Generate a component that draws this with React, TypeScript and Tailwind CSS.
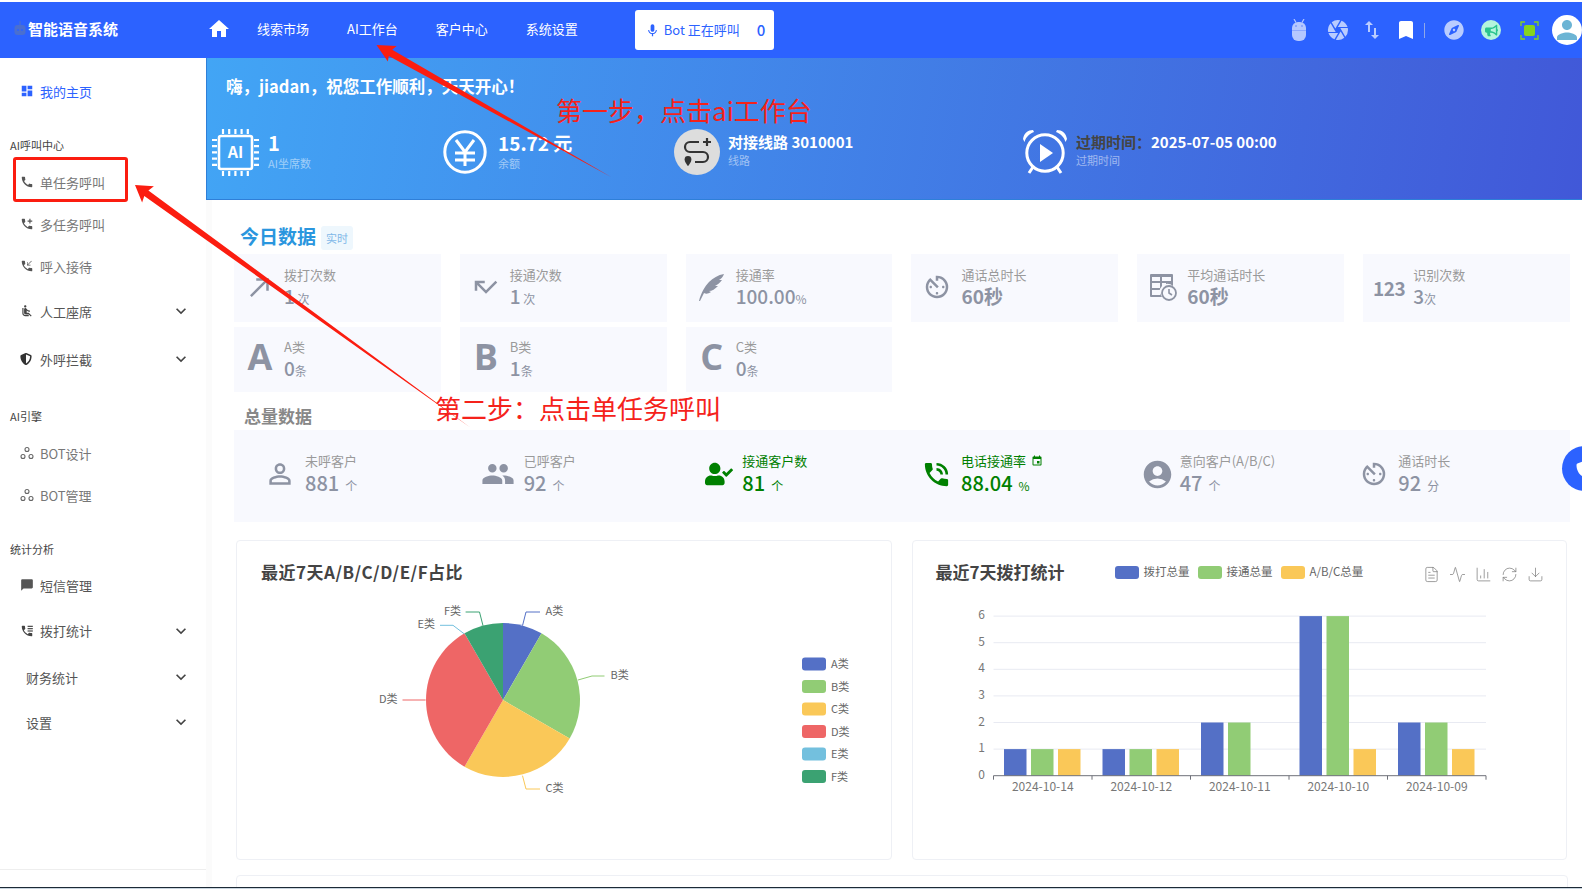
import React from "react";
import {
  MdHome, MdMic, MdCamera, MdSwapVert, MdBookmark, MdDashboard, MdCall, MdAddIcCall, MdPhoneCallback,
  MdAirlineSeatReclineNormal, MdExpandMore, MdChatBubble, MdCallMade, MdCallMissed, MdAvTimer,
  MdPermIdentity, MdPeople, MdPhoneInTalk, MdAccountCircle, MdEvent, MdPerson,
} from "react-icons/md";
import { FaCompass, FaBullhorn, FaShieldAlt, FaUserCheck } from "react-icons/fa";
import { FileText, Activity, ChartColumn, RefreshCw, Download } from "lucide-react";

const PHONE = "M20 15.5c-1.25 0-2.45-.2-3.57-.57-.35-.11-.74-.03-1.02.24l-2.2 2.2c-2.83-1.44-5.14-3.75-6.59-6.59l2.2-2.21c.28-.27.36-.66.25-1.01C8.7 6.45 8.5 5.25 8.5 4c0-.55-.45-1-1-1H4c-.55 0-1 .45-1 1 0 9.39 7.61 17 17 17 .55 0 1-.45 1-1v-3.5c0-.55-.45-1-1-1z";

function BotIcon() {
  return (
    <svg width="14" height="14" viewBox="0 0 14 14" fill="none" stroke="#666" strokeWidth="1.1">
      <circle cx="7" cy="3.5" r="2" />
      <circle cx="3" cy="10.5" r="2" />
      <circle cx="11" cy="10.5" r="2" />
    </svg>
  );
}
function DialStat() {
  return (
    <svg width="14" height="14" viewBox="0 0 24 24" fill="#444">
      <path d={PHONE} />
      <rect x="13" y="3" width="9" height="2" />
      <rect x="13" y="7" width="9" height="2" />
      <rect x="13" y="11" width="9" height="2" />
    </svg>
  );
}
function LogoIcon() {
  return (
    <svg width="12" height="15" viewBox="0 0 12 15" fill="#4a6fd0">
      <rect x="5.400" y="0" width="1.200" height="4" />
      <rect x="0.500" y="4" width="11" height="10" rx="3" />
      <circle cx="4" cy="9" r="1" fill="#2c62ff" />
      <circle cx="8" cy="9" r="1" fill="#2c62ff" />
    </svg>
  );
}
function AndroidIcon() {
  return (
    <svg width="16" height="22" viewBox="0 0 16 22" fill="#b5c8ff">
      <rect x="1" y="3" width="14" height="19" rx="6" />
      <path d="M3 0l2 3.5M13 0l-2 3.5" stroke="#b5c8ff" strokeWidth="1.2" />
      <rect x="1" y="11" width="14" height="1" fill="#8ea9ff" />
      <circle cx="5" cy="7" r="0.8" fill="#5a7fff" />
      <circle cx="11" cy="7" r="0.8" fill="#5a7fff" />
    </svg>
  );
}
function FrameIcon() {
  return (
    <svg width="19" height="19" viewBox="0 0 19 19" fill="none" stroke="#86d41e" strokeWidth="1.3">
      <path d="M1 5V1h4M14 1h4v4M18 14v4h-4M5 18H1v-4" />
      <rect x="4" y="4" width="11" height="11" rx="2" fill="#86d41e" stroke="none" />
    </svg>
  );
}
function ChipIcon() {
  const pins = [0, 1, 2, 3, 4];
  return (
    <svg width="47" height="47" viewBox="0 0 47 47" fill="none" stroke="#fff">
      <rect x="7" y="7" width="33" height="33" rx="2" strokeWidth="2.6" />
      {pins.map((i) => (
        <g key={i} strokeWidth="2.2">
          <path d={`M${11 + i * 6.2} 0v5M${11 + i * 6.2} 42v5M0 ${11 + i * 6.2}h5M42 ${11 + i * 6.2}h5`} />
        </g>
      ))}
      <text x="23.5" y="29" textAnchor="middle" fill="#fff" stroke="none" fontSize="16" fontWeight="700">AI</text>
    </svg>
  );
}
function YenIcon() {
  return (
    <svg width="44" height="44" viewBox="0 0 44 44" fill="none" stroke="#fff" strokeWidth="3">
      <circle cx="22" cy="22" r="20.2" />
      <path d="M13 10l9 12 9-12M12 23h20M12 30h20M22 22v14" />
    </svg>
  );
}
function RouteIcon() {
  return (
    <div className="w-[46px] h-[46px] rounded-full bg-[#dddddd] flex items-center justify-center">
      <svg width="32" height="32" viewBox="0 0 32 32" fill="none" stroke="#333" strokeWidth="2.2">
        <path d="M18 6H9a5 5 0 0 0 0 10h13a5 5 0 0 1 0 10H14" />
        <path d="M26 2v8M22 6h8" />
        <path d="M7 20a3.4 3.4 0 0 1 3.4 3.4C10.4 26 7 30 7 30s-3.4-4-3.4-6.6A3.4 3.4 0 0 1 7 20z" fill="#333" stroke="none" />
      </svg>
    </div>
  );
}
function AlarmIcon() {
  return (
    <svg width="46" height="46" viewBox="0 0 46 46" fill="none" stroke="#fff" strokeWidth="3">
      <circle cx="23" cy="24" r="18.2" />
      <path d="M18 15l13 9-13 9z" fill="#fff" stroke="none" />
      <path d="M1 10C2 4 6 1 11 1l1 2C7 5 4 8 2.500 13z" fill="#fff" stroke="none" />
      <path d="M45 10c-1-6-5-9-10-9l-1 2c5 2 8 5 9.500 10z" fill="#fff" stroke="none" />
      <path d="M11 38l-4 6M35 38l4 6" />
    </svg>
  );
}
function TableClock() {
  return (
    <svg width="28" height="28" viewBox="0 0 28 28" fill="none">
      <path d="M2 1h21a1 1 0 0 1 1 1v11a7.500 7.500 0 0 0-11 11H2a1 1 0 0 1-1-1V2a1 1 0 0 1 1-1z" fill="#8d93a3" />
      <path d="M3 8h8v-4H3zM13 8h9v-4h-9zM3 15h8v-5H3zM13 15h4v-5h-4zM3 22h8v-5H3z" fill="#f8f9fe" />
      <circle cx="20" cy="20" r="7" stroke="#8d93a3" strokeWidth="1.8" />
      <path d="M20 16v4l3 2" stroke="#8d93a3" strokeWidth="1.6" />
    </svg>
  );
}
function Quill() {
  return (
    <svg width="27" height="28" viewBox="0 0 27 28" fill="#8d93a3">
      <path d="M1 28C3 20 7 13 11 9 15 5 20 2 26 1 25 4 23 6 21 7L24 7C22 10 19 12 17 13L20 13C17 16 14 18 11 18L13 19C10 21 8 21 6 20L2 28Z" />
    </svg>
  );
}

function NavItem({ icon, text, color = "#777", chevron = false, h = "h-[42px]", cls = "" }: { icon?: React.ReactNode; text: string; color?: string; chevron?: boolean; h?: string; cls?: string }) {
  return (
    <div className={`flex items-center shrink-0 ${h} ${cls}`} style={{ color }}>
      {icon ? <div className="w-[40px] pl-[20px] flex items-center shrink-0">{icon}</div> : <div className="w-[26px] shrink-0" />}
      <span className="text-[13px] leading-none">{text}</span>
      {chevron && <MdExpandMore className="ml-auto mr-[15px] text-[#444]" size={20} />}
    </div>
  );
}

function SectionLabel({ text, cls }: { text: string; cls: string }) {
  return <div className={`h-[16px] shrink-0 pl-[10px] text-[11px] leading-[16px] text-[#444] ${cls}`}>{text}</div>;
}

function Sidebar() {
  const g = "#555";
  return (
    <aside className="w-[206px] shrink-0 flex flex-col bg-white">
      <NavItem cls="mt-[12px]" color="#2c62ff" text="我的主页" icon={<MdDashboard size={14} color="#2c62ff" />} />
      <SectionLabel cls="mt-[25px]" text="AI呼叫中心" />
      <NavItem cls="mt-[8px]" text="单任务呼叫" icon={<MdCall size={14} color={g} />} />
      <NavItem text="多任务呼叫" icon={<MdAddIcCall size={14} color={g} />} />
      <NavItem text="呼入接待" icon={<MdPhoneCallback size={14} color={g} />} />
      <NavItem cls="mt-[1px]" color="#555" h="h-[46px]" chevron text="人工座席" icon={<MdAirlineSeatReclineNormal size={14} color="#444" />} />
      <NavItem color="#555" h="h-[50px]" chevron text="外呼拦截" icon={<FaShieldAlt size={12} color="#333" />} />
      <SectionLabel cls="mt-[24px]" text="AI引擎" />
      <NavItem cls="mt-[8px]" text="BOT设计" icon={<BotIcon />} />
      <NavItem text="BOT管理" icon={<BotIcon />} />
      <SectionLabel cls="mt-[25px]" text="统计分析" />
      <NavItem cls="mt-[7px]" color="#555" text="短信管理" icon={<MdChatBubble size={14} color="#555" />} />
      <NavItem cls="mt-[1px]" color="#555" h="h-[47px]" chevron text="拨打统计" icon={<DialStat />} />
      <NavItem color="#555" h="h-[46px]" chevron text="财务统计" />
      <NavItem color="#555" h="h-[44px]" chevron text="设置" />
      <div className="mt-auto h-[18px] border-t border-[#eeeeee]" />
    </aside>
  );
}

function Header() {
  return (
    <header className="h-[56px] shrink-0 bg-[#2c62ff] flex items-center text-white">
      <div className="w-[207px] shrink-0 flex items-center pl-[14px] gap-[2px] -mt-[3px]">
        <LogoIcon />
        <span className="text-[15px] font-bold leading-none">智能语音系统</span>
      </div>
      <MdHome size={24} className="shrink-0 -mt-[2px]" />
      <nav className="flex text-[13px] ml-[26px] gap-[38px] leading-none -mt-[3px]">
        <span>线索市场</span>
        <span>AI工作台</span>
        <span>客户中心</span>
        <span>系统设置</span>
      </nav>
      <div className="ml-[57px] w-[139px] h-[40px] rounded-[3px] bg-white text-[#2c62ff] flex items-center pl-[10px] text-[13px]">
        <MdMic size={15} />
        <span className="ml-[4px]">Bot 正在呼叫</span>
        <span className="ml-[17px] text-[15px] font-medium">0</span>
      </div>
      <div className="ml-auto flex items-center h-full">
        <AndroidIcon />
        <MdCamera size={24} color="#b9ccff" className="ml-[19px]" />
        <MdSwapVert size={24} color="#b9ccff" className="ml-[10px]" />
        <MdBookmark size={24} color="#ffffff" className="ml-[10px]" />
        <div className="w-px h-[15px] bg-[#8fa8e8] ml-[6px]" />
        <FaCompass size={20} color="#b9ccff" className="ml-[19px]" />
        <div className="ml-[17px] w-[20px] h-[20px] rounded-full bg-[#b4f5dc] flex items-center justify-center">
          <FaBullhorn size={13} color="#29c48e" />
        </div>
        <div className="ml-[19px]"><FrameIcon /></div>
        <div className="ml-[13px] w-[30px] h-[30px] rounded-full bg-white flex items-end justify-center overflow-hidden shrink-0">
          <MdPerson size={36} color="#6cb4d4" className="-mb-[3px]" />
        </div>
      </div>
    </header>
  );
}

function Hero() {
  return (
    <section className="h-[142px] shrink-0 bg-[linear-gradient(100deg,#42a5f5,#4158d8)] text-white border-l border-[#2f7fd8] border-b pt-[16px]">
      <div className="pl-[19px] text-[16.5px] font-bold leading-[24px]">嗨，jiadan，祝您工作顺利，天天开心！</div>
      <div className="flex items-center h-[52px] mt-[28px] pl-[5px]">
        <div className="w-[231px] flex items-center gap-[9px]">
          <ChipIcon />
          <div>
            <div className="text-[20px] font-bold leading-[22px]">1</div>
            <div className="text-[11px] leading-[18px] text-white/50">AI坐席数</div>
          </div>
        </div>
        <div className="w-[231px] flex items-center gap-[11px]">
          <YenIcon />
          <div>
            <div className="text-[19px] font-bold leading-[22px]">15.72 元</div>
            <div className="text-[11px] leading-[18px] text-white/50">余额</div>
          </div>
        </div>
        <div className="w-[348px] flex items-center gap-[8px]">
          <RouteIcon />
          <div className="-mt-[5px]">
            <div className="text-[15px] font-bold leading-[20px]">对接线路 3010001</div>
            <div className="text-[11px] leading-[16px] text-white/50">线路</div>
          </div>
        </div>
        <div className="flex items-center gap-[8px]">
          <AlarmIcon />
          <div className="-mt-[5px]">
            <div className="text-[15px] font-bold leading-[20px]"><span className="text-[#444444]">过期时间：</span>2025-07-05 00:00</div>
            <div className="text-[11px] leading-[16px] text-white/50">过期时间</div>
          </div>
        </div>
      </div>
    </section>
  );
}

type Stat = { icon: React.ReactNode; label: string; value: string; unit?: string; bold?: boolean };

function StatCard({ s, tall }: { s: Stat; tall: boolean }) {
  return (
    <div className={`bg-[#f8f9fe] flex ${tall ? "h-[68px] pt-[12px]" : "h-[65px] pt-[11px]"}`}>
      <div className={`w-[50px] pl-[2px] shrink-0 flex items-center justify-center ${tall ? "h-[42px]" : "h-[38px]"}`}>{s.icon}</div>
      <div>
        <div className="text-[13px] leading-[18px] text-[#9a9a9a]">{s.label}</div>
        <div className={`text-[19px] leading-[24px] text-[#8d93a3] ${s.bold ? "font-bold" : "font-medium"}`}>
          {s.value}
          {s.unit && <span className="text-[12px] font-normal">{s.unit}</span>}
        </div>
      </div>
    </div>
  );
}

function TotalItem({ icon, label, value, unit, green, nudge = "" }: { icon: React.ReactNode; label: React.ReactNode; value: string; unit: string; green?: boolean; nudge?: string }) {
  return (
    <div className="flex pt-[22px]">
      <div className={`w-[50px] h-[44px] shrink-0 flex items-center justify-end ${nudge}`}>{icon}</div>
      <div className="ml-[9px]">
        <div className={`text-[13px] leading-[18px] flex items-center gap-[5px] ${green ? "text-[#008000]" : "text-[#9a9a9a]"}`}>{label}</div>
        <div className={`text-[20px] leading-[25px] font-medium ${green ? "text-[#008000]" : "text-[#8d93a3]"}`}>
          {value}
          <span className="text-[12px] font-normal ml-[6px]">{unit}</span>
        </div>
      </div>
    </div>
  );
}

const C = { a: "#5470c6", b: "#91cc75", c: "#fac858", d: "#ee6666", e: "#73c0de", f: "#3ba272" };

function slice(cx: number, cy: number, r: number, a0: number, a1: number) {
  const p = (a: number) => {
    const t = (a * Math.PI) / 180;
    return `${(cx + r * Math.sin(t)).toFixed(2)} ${(cy - r * Math.cos(t)).toFixed(2)}`;
  };
  return `M${cx} ${cy}L${p(a0)}A${r} ${r} 0 ${a1 - a0 > 180 ? 1 : 0} 1 ${p(a1)}Z`;
}

function PieCard() {
  const cx = 503, cy = 700, r = 77;
  const labels: [string, string, string, number, number, "start" | "end"][] = [
    ["A类", C.a, "M522.5 625.7L526 612H540", 545.5, 611, "start"],
    ["B类", C.b, "M578 680L592 676H604.500", 610.5, 675, "start"],
    ["C类", C.c, "M522.5 775.7L526 789H540", 545.5, 788, "start"],
    ["D类", C.d, "M425.600 700H402.500", 397.5, 699, "end"],
    ["E类", C.e, "M464.400 634L453 625.3H440", 435, 624, "end"],
    ["F类", C.f, "M483 625.7L479.500 612H465.600", 461, 611, "end"],
  ];
  const legend: [string, string][] = [["A类", C.a], ["B类", C.b], ["C类", C.c], ["D类", C.d], ["E类", C.e], ["F类", C.f]];
  return (
    <div className="h-[320px] rounded-[4px] border border-[#eef0f5] bg-white overflow-hidden">
      <div className="pt-[21px] pl-[24px] text-[17px] font-bold leading-[20px] tracking-[0.5px] text-[#444444]">最近7天A/B/C/D/E/F占比</div>
      <svg width="654" height="276" viewBox="237 582 654 276" className="block">
        <path d={slice(cx, cy, r, 0, 30)} fill={C.a} />
        <path d={slice(cx, cy, r, 30, 120)} fill={C.b} />
        <path d={slice(cx, cy, r, 120, 210)} fill={C.c} />
        <path d={slice(cx, cy, r, 210, 330)} fill={C.d} />
        <path d={slice(cx, cy, r, 330, 360)} fill={C.f} />
        {labels.map(([t, col, d, x, y, anchor]) => (
          <g key={t}>
            <path d={d} fill="none" stroke={col} strokeWidth="1" />
            <text x={x} y={y + 4} fontSize="11" fill="#666" textAnchor={anchor}>{t}</text>
          </g>
        ))}
        {legend.map(([t, col], i) => (
          <g key={t}>
            <rect x="802" y={657.5 + i * 22.5} width="24" height="13" rx="3" fill={col} />
            <text x="831" y={668 + i * 22.5} fontSize="11" fill="#666">{t}</text>
          </g>
        ))}
      </svg>
    </div>
  );
}

function BarCard() {
  const data = [
    ["2024-10-14", 1, 1, 1],
    ["2024-10-12", 1, 1, 1],
    ["2024-10-11", 2, 2, 0],
    ["2024-10-10", 6, 6, 1],
    ["2024-10-09", 2, 2, 1],
  ] as [string, number, number, number][];
  const x0 = 993.5, yb = 775.7, u = 26.6, cw = 98.5;
  return (
    <div className="h-[320px] rounded-[4px] border border-[#eef0f5] bg-white overflow-hidden">
      <div className="flex items-center pt-[21px] pl-[23px] h-[41px]">
        <span className="text-[17px] font-bold leading-[20px] text-[#444444] w-[179px] shrink-0">最近7天拨打统计</span>
        <div className="flex items-center text-[11.5px] text-[#666] leading-none">
          <span className="w-[24px] h-[13px] rounded-[3px] bg-[#5470c6]" />
          <span className="ml-[5px] w-[54px]">拨打总量</span>
          <span className="w-[24px] h-[13px] rounded-[3px] bg-[#91cc75]" />
          <span className="ml-[5px] w-[54px]">接通总量</span>
          <span className="w-[24px] h-[13px] rounded-[3px] bg-[#fac858]" />
          <span className="ml-[5px]">A/B/C总量</span>
        </div>
        <div className="ml-[60px] flex items-center gap-[9px] text-[#777] mt-[4px]">
          <FileText size={17} strokeWidth={1} />
          <Activity size={17} strokeWidth={1} />
          <ChartColumn size={17} strokeWidth={1} />
          <RefreshCw size={17} strokeWidth={1} />
          <Download size={17} strokeWidth={1} />
        </div>
      </div>
      <svg width="650" height="276" viewBox="913 582 650 276" className="block">
        {[1, 2, 3, 4, 5, 6].map((v) => (
          <line key={v} x1={x0} x2={x0 + cw * 5} y1={yb - v * u} y2={yb - v * u} stroke="#e8eaf2" strokeWidth="1" />
        ))}
        {[0, 1, 2, 3, 4, 5, 6].map((v) => (
          <text key={v} x="985" y={yb - v * u + 3} fontSize="12" fill="#777" textAnchor="end">{v}</text>
        ))}
        {data.map((row, i) => (
          <g key={row[0]}>
            {[C.a, C.b, C.c].map((col, j) => {
              const val = row[j + 1] as number;
              return val > 0 ? (
                <rect key={col} x={x0 + 10.5 + i * cw + j * 27} y={yb - val * u} width="22.500" height={val * u} fill={col} />
              ) : null;
            })}
            <text x={x0 + cw * (i + 0.5)} y="791" fontSize="12" fill="#777" textAnchor="middle">{row[0]}</text>
          </g>
        ))}
        <path d={`M${x0} ${yb}H${x0 + cw * 5}`} stroke="#6e7079" strokeWidth="1" />
        {[0, 1, 2, 3, 4, 5].map((i) => (
          <path key={i} d={`M${x0 + i * cw} ${yb}v4`} stroke="#6e7079" strokeWidth="1" />
        ))}
      </svg>
    </div>
  );
}

function Content() {
  const ic = "#8d93a3";
  const row1: Stat[] = [
    { icon: <MdCallMade size={30} color={ic} />, label: "拨打次数", value: "1", unit: " 次" },
    { icon: <MdCallMissed size={30} color={ic} />, label: "接通次数", value: "1", unit: " 次" },
    { icon: <Quill />, label: "接通率", value: "100.00", unit: "%" },
    { icon: <MdAvTimer size={30} color={ic} />, label: "通话总时长", value: "60秒", bold: true },
    { icon: <TableClock />, label: "平均通话时长", value: "60秒", bold: true },
    { icon: <span className="text-[19px] font-bold leading-none tracking-[-0.5px] text-[#8d93a3]">123</span>, label: "识别次数", value: "3", unit: "次" },
  ];
  const big = (t: string) => <span className="font-['Open_Sans',sans-serif] text-[36px] font-bold leading-none text-[#8d93a3]">{t}</span>;
  const row2: Stat[] = [
    { icon: big("A"), label: "A类", value: "0", unit: "条" },
    { icon: big("B"), label: "B类", value: "1", unit: "条" },
    { icon: big("C"), label: "C类", value: "0", unit: "条" },
  ];
  return (
    <div className="flex-1 min-h-0 border-l-[6px] border-[#fbfbfb] pl-[22px] pr-[12px] overflow-hidden">
      <div className="flex items-center h-[24px] mt-[26px] pl-[6px]">
        <span className="text-[19px] font-bold leading-none text-[#2a96de] mb-[5px]">今日数据</span>
        <span className="ml-[5px] w-[32px] h-[24px] rounded-[3px] bg-[#eef7fd] text-[#7fb8e8] text-[11px] flex items-center justify-center">实时</span>
      </div>
      <div className="grid grid-cols-6 gap-x-[19px] gap-y-[5px] mt-[4px]">
        {row1.map((s) => <StatCard key={s.label} s={s} tall />)}
        {row2.map((s) => <StatCard key={s.label} s={s} tall={false} />)}
      </div>
      <div className="h-[38px] pt-[10px] flex items-center pl-[10px] text-[17px] font-bold text-[#888888]">总量数据</div>
      <div className="h-[92px] bg-[#f8f9fe] grid grid-cols-6 px-[12px]">
        <TotalItem icon={<MdPermIdentity size={32} color={ic} />} label="未呼客户" value="881" unit="个" />
        <TotalItem icon={<MdPeople size={34} color={ic} />} label="已呼客户" value="92" unit="个" />
        <TotalItem green icon={<FaUserCheck size={28} color="#008000" />} label="接通客户数" value="81" unit="个" />
        <TotalItem green icon={<MdPhoneInTalk size={31} color="#008000" />} label={<>电话接通率<MdEvent size={12} /></>} value="88.04" unit="%" />
        <TotalItem nudge="pl-[3px] w-[53px] -mr-[3px]" icon={<MdAccountCircle size={33} color={ic} />} label="意向客户(A/B/C)" value="47" unit="个" />
        <TotalItem icon={<MdAvTimer size={30} color={ic} />} label="通话时长" value="92" unit="分" />
      </div>
      <div className="grid grid-cols-2 gap-x-[20px] mt-[18px] ml-[2px] mr-[3px]">
        <PieCard />
        <BarCard />
      </div>
      <div className="h-[20px] mt-[15px] ml-[2px] mr-[2px] rounded-t-[4px] border border-[#eef0f5] bg-white" />
    </div>
  );
}

function Annotations() {
  return (
    <>
      <svg className="absolute left-0 top-0 pointer-events-none" width="1582" height="889" viewBox="0 0 1582 889">
        <polygon points="376.5,45 387.8,61.6 388.8,55.9 611,177 392.2,49.8 396.6,46" fill="#fb1d10" />
        <polygon points="135,185 142.1,202.500 144.3,196 470.6,427.7 148.4,190.4 153.9,186.3" fill="#fb1d10" />
      </svg>
      <div className="absolute left-[13px] top-[157px] w-[115px] h-[45px] border-[3px] border-[#fb1d10] rounded-[3px] pointer-events-none" />
      <div className="absolute left-[556px] top-[92px] text-[26px] leading-[36px] text-[#f5221b] whitespace-nowrap">第一步，点击ai工作台</div>
      <div className="absolute left-[435px] top-[390px] text-[26px] leading-[36px] text-[#f5221b] whitespace-nowrap">第二步：点击单任务呼叫</div>
    </>
  );
}

export default function App() {
  return (
    <div className="relative h-screen w-full overflow-hidden bg-white flex flex-col font-['Noto_Sans_CJK_SC','Noto_Sans',sans-serif]">
      <div className="h-[2px] shrink-0 bg-white" />
      <Header />
      <div className="flex flex-1 min-h-0">
        <Sidebar />
        <main className="flex-1 min-w-0 flex flex-col">
          <Hero />
          <Content />
        </main>
      </div>
      <div className="h-px shrink-0 bg-[#1c2a36]" />
      <div className="h-px shrink-0 bg-[#c8d4de]" />
      <div className="absolute left-[1562px] top-[446px] w-[45px] h-[45px] rounded-full bg-[#2c62ff] flex items-center pl-[14px]">
        <FaShieldAlt size={16} color="#ffffff" />
      </div>
      <Annotations />
    </div>
  );
}
